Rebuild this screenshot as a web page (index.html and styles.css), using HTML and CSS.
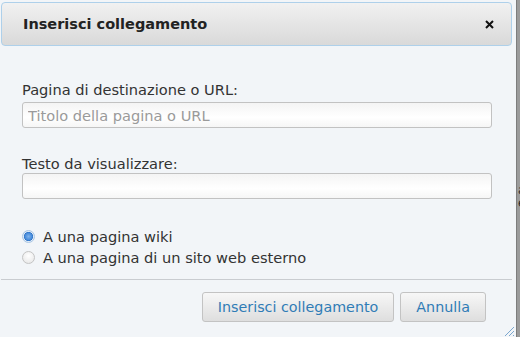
FILE: index.html
```html
<!DOCTYPE html>
<html lang="it">
<head>
  <meta charset="UTF-8">
  <title>Inserisci collegamento</title>
  <link rel="stylesheet" href="styles.css">
</head>
<body>
  <div class="dialog">
    <div class="titlebar">
      <span class="title">Inserisci collegamento</span>
      <button class="close" title="Chiudi">
        <svg width="9" height="9" viewBox="0 0 9 9"><path d="M1 1L8 8M8 1L1 8" stroke="#111" stroke-width="2" fill="none"/></svg>
      </button>
    </div>

    <div class="content">
      <label class="label first" for="target">Pagina di destinazione o URL:</label>
      <input class="field" id="target" type="text" placeholder="Titolo della pagina o URL">

      <label class="label second" for="text">Testo da visualizzare:</label>
      <input class="field" id="text" type="text">

      <div class="options">
        <label class="option"><input type="radio" name="kind" checked> A una pagina wiki</label>
        <label class="option"><input type="radio" name="kind"> A una pagina di un sito web esterno</label>
      </div>
    </div>

    <div class="buttonpane">
      <button class="button">Inserisci collegamento</button>
      <button class="button">Annulla</button>
    </div>

    <!-- maniglia di ridimensionamento -->
    <svg class="resize" width="12" height="12" viewBox="0 0 12 12">
      <path d="M11 2L2 11M11 6L6 11M11 10L10 11" stroke="#7ba7cf" stroke-width="1" fill="none"/>
    </svg>
  </div>
  <div class="behind">
    <p>a</p>
    <p>e</p>
  </div>
</body>
</html>
```

FILE: styles.css
```css
* {
  margin: 0;
  padding: 0;
  box-sizing: border-box;
}
html, body {
  height: 100%;
}
body {
  font-family: 'DejaVu Sans', sans-serif;
  font-size: 14.6px;
  color: #333;
  background-color: #9b9b9b;
  display: flex;
  overflow: hidden;
}
.dialog {
  position: relative;
  width: 517px;
  flex-shrink: 0;
  height: 337px;
  overflow: hidden;
  padding: 2px 4px 0 1px;
  background-color: #f2f5f8;
  border-right: 1px solid #7d7d7d;
}
.titlebar {
  display: flex;
  justify-content: space-between;
  align-items: center;
  height: 44px;
  padding: 0 17px 0 21px;
  border: 1px solid #aed0ea;
  border-radius: 4px;
  background: linear-gradient(#f1f1f1, #d9d9d9);
}
.title {
  font-weight: bold;
  font-size: 14.5px;
  color: #222;
}
.close {
  border: none;
  background: none;
  display: flex;
  padding: 0;
}
.content {
  padding: 35px 0 0 21px;
}
.label {
  display: block;
  line-height: 17px;
}
.label.first {
  margin-bottom: 4px;
}
.label.second {
  margin-top: 27px;
  margin-bottom: 1px;
}
.field {
  display: block;
  width: 470px;
  height: 26px;
  padding: 0 5px;
  font-family: inherit;
  font-size: 14.6px;
  color: #333;
  border: 1px solid #c2c2c2;
  border-radius: 3px;
  background: linear-gradient(#f4f4f4, #ffffff 60%, #f6f6f6);
  outline: none;
}
.field::placeholder {
  color: #9a9a9a;
}
.options {
  margin-top: 29px;
  display: flex;
  flex-direction: column;
  gap: 4px;
}
.option {
  display: flex;
  align-items: center;
  gap: 8px;
  line-height: 17px;
}
.option input {
  appearance: none;
  width: 13px;
  height: 13px;
  margin: 0;
  border-radius: 50%;
  border: 1px solid #c4c4c4;
  background: radial-gradient(circle at 50% 35%, #ffffff, #e4e4e4);
}
.option input:checked {
  border-color: #a9c6e4;
  background: radial-gradient(circle at 50% 50%, #7fb3ec 0, #3f86d8 50%, #2d6fc2 55%, #dfeaf6 62%);
}
.buttonpane {
  display: flex;
  justify-content: flex-end;
  gap: 6px;
  margin: 13px 0 0 0;
  padding: 12px 26px 0 0;
  border-top: 1px solid #c9ccd0;
}
.button {
  height: 30px;
  padding: 0 15px;
  font-family: inherit;
  font-size: 14.3px;
  color: #2f7cb6;
  border: 1px solid #c3c3c3;
  border-radius: 3px;
  background: linear-gradient(#f7f7f7, #dedede);
  cursor: pointer;
}
.resize {
  position: absolute;
  left: 503px;
  top: 325px;
}
.behind {
  padding-top: 184px;
  padding-left: 1px;
  font-size: 12px;
  line-height: 13px;
  color: #2b2b2b;
}
```
